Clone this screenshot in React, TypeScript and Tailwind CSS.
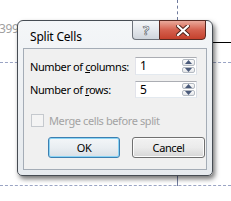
import React from "react";

const uiFont = { fontFamily: '"Segoe UI", "Noto Sans", "Liberation Sans", sans-serif' };

function SpinArrow({ up }: { up?: boolean }) {
  return (
    <svg width="7" height="4" viewBox="0 0 7 4" className="block">
      {up ? (
        <polygon points="0,4 3.5,0 7,4" fill="#4a5a7a" />
      ) : (
        <polygon points="0,0 7,0 3.5,4" fill="#4a5a7a" />
      )}
    </svg>
  );
}

function SpinBox({ value, h }: { value: string; h: string }) {
  return (
    <div
      className={`flex w-[62px] ${h} border border-[#abadb3] border-r-[#dbdfe6] border-b-[#e3e9ef] border-l-[#e2e3ea] bg-white`}
    >
      <div className="flex flex-1 items-center pl-[4px] text-[12px] leading-none text-black">{value}</div>
      <div className="flex w-[15px] flex-col gap-px p-px">
        <div className="flex flex-1 items-center justify-center rounded-[2px] border border-[#b4bac2] bg-gradient-to-b from-[#fbfbfb] to-[#e4e6e9]">
          <SpinArrow up />
        </div>
        <div className="flex flex-1 items-center justify-center rounded-[2px] border border-[#b4bac2] bg-gradient-to-b from-[#fbfbfb] to-[#e4e6e9]">
          <SpinArrow />
        </div>
      </div>
    </div>
  );
}

function CaptionButtons() {
  return (
    <div className="absolute right-[6px] top-[-1px] flex h-[20px]">
      <div className="flex w-[27px] items-center justify-center rounded-bl-[4px] border border-r-0 border-[#6d737b] bg-gradient-to-b from-[#f5f7f9] via-[#e3e7ec] to-[#cfd5dc]">
        <span
          className="text-[13px] font-bold leading-none text-white"
          style={{ ...uiFont, WebkitTextStroke: "0.6px #4b525a" }}
        >
          ?
        </span>
      </div>
      <div className="flex w-[47px] items-center justify-center rounded-br-[4px] border border-[#5b2a22] bg-gradient-to-b from-[#e9a99b] via-[#d4604e] to-[#c4402c]">
        <svg width="14" height="11" viewBox="0 0 14 11">
          <path d="M2 1 L12 10 M12 1 L2 10" stroke="#4a2018" strokeWidth="4" strokeLinecap="square" />
          <path d="M2 1 L12 10 M12 1 L2 10" stroke="#ffffff" strokeWidth="2.2" strokeLinecap="square" />
        </svg>
      </div>
    </div>
  );
}

export default function App() {
  return (
    <div className="relative h-[201px] w-[231px] overflow-hidden bg-white" style={uiFont}>
      {/* document underneath */}
      <div className="absolute left-0 right-0 top-[62px] border-t border-dashed border-[#9aa4c4]" />
      <div className="absolute left-0 right-0 top-[185px] border-t border-dashed border-[#9aa4c4]" />
      <div className="absolute left-[177px] top-0 h-[20px] border-l border-dashed border-[#6f7a9c]" />
      <div className="absolute left-[177px] top-[170px] h-[16px] border-l border-[#6f7a9c]" />
      <div className="absolute left-[200px] right-0 top-[42px] border-t border-black" />
      <div className="absolute left-[-1px] top-[23px] text-[12px] leading-none tracking-[-0.4px] text-[#a0a0a0]">399</div>

      {/* dialog */}
      <div className="absolute left-[17px] top-[20px] flex h-[156px] w-[196px] flex-col rounded-t-[6px] rounded-b-[5px] border border-[#464c53] bg-gradient-to-b from-[#f4f6f8] to-[#e6eaee] px-[5px] pb-[5px] shadow-[2px_3px_5px_rgba(0,0,0,0.55)]">
        <CaptionButtons />
        <div className="flex h-[27px] items-center pl-[7px] pt-[4px] text-[12px] leading-none tracking-[-0.2px] text-black">
          Split Cells
        </div>
        <div className="flex flex-1 flex-col border border-[#a4acb6] bg-[#f0f0f0] pl-[6px] pt-[8px] text-[11px] leading-none tracking-[-0.4px] text-black">
          <div className="grid grid-cols-[105px_62px] items-center">
            <span className="whitespace-nowrap">
              Number of <span className="underline">c</span>olumns:
            </span>
            <SpinBox value="1" h="h-[18px]" />
          </div>
          <div className="mt-[6px] grid grid-cols-[105px_62px] items-center">
            <span className="whitespace-nowrap">
              Number of <span className="underline">r</span>ows:
            </span>
            <SpinBox value="5" h="h-[17px]" />
          </div>
          <div className="mt-[16px] flex items-center gap-[5px] pl-[1px]">
            <div className="h-[13px] w-[13px] border border-[#c5c9ce] bg-[#f4f4f4]" />
            <span className="whitespace-nowrap text-[#a3a3a3]">Merge cells before split</span>
          </div>
          <div className="mt-[10px] flex gap-[12px] pl-[18px]">
            <div className="flex h-[21px] w-[72px] items-center justify-center rounded-[3px] border border-[#3c7fb1] bg-gradient-to-b from-[#f3f6f8] via-[#e9eef2] to-[#d9e0e6] shadow-[inset_0_0_0_1px_#8ad4f5]">
              OK
            </div>
            <div className="flex h-[21px] w-[73px] items-center justify-center rounded-[3px] border border-[#707070] bg-gradient-to-b from-[#f2f2f2] via-[#ebebeb] to-[#d6d6d6] shadow-[inset_0_0_0_1px_#fcfcfc]">
              Cancel
            </div>
          </div>
        </div>
      </div>
    </div>
  );
}
